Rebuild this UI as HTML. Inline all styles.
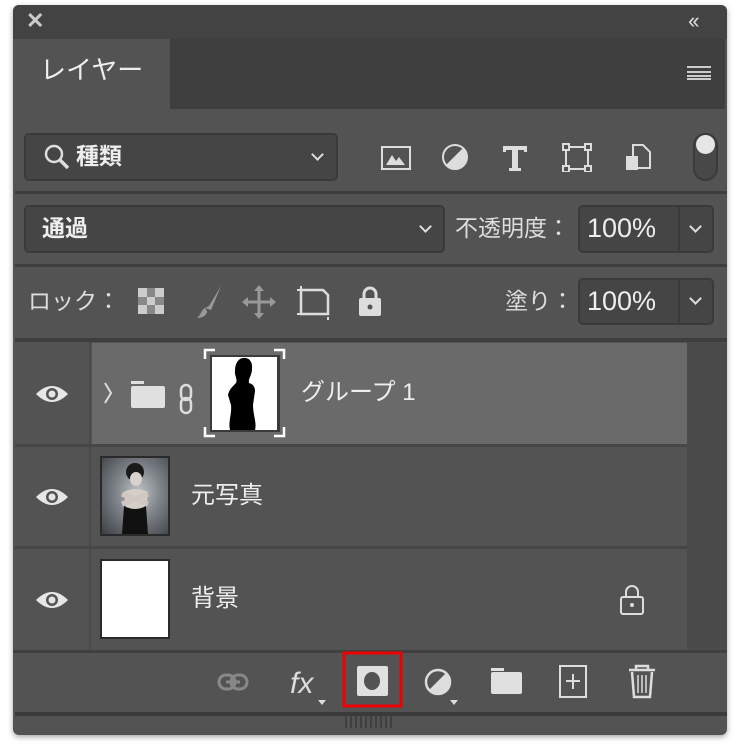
<!DOCTYPE html><html><head><meta charset="utf-8"><style>
*{margin:0;padding:0;box-sizing:border-box}
body{width:740px;height:753px;background:#fff;position:relative;overflow:hidden;font-family:"Liberation Sans","Noto Sans CJK JP",sans-serif;color:#e6e6e6}
.a{position:absolute}
.box{position:absolute;background:#454545;border:2px solid #3a3a3a;border-radius:5px}
.t{position:absolute;font-size:23px;white-space:nowrap;line-height:30px}
.sep{position:absolute;left:15px;width:712px;height:3px;background:#3e3e3e}
.chev{position:absolute;width:9px;height:9px;border-right:2px solid #ddd;border-bottom:2px solid #ddd;transform:rotate(45deg)}
</style></head><body>
<div class="a" style="left:13px;top:5px;width:714px;height:730px;background:#535353;border-radius:6px;box-shadow:0 2px 6px rgba(0,0,0,.35)"></div>
<div class="a" style="left:13px;top:5px;width:714px;height:34px;background:#434343;border-radius:6px 6px 0 0"></div>
<div class="t" style="left:26px;top:6px;font-size:22px;font-weight:bold;color:#ccc">✕</div>
<div class="t" style="left:688px;top:6px;font-size:22px;color:#ddd;letter-spacing:-3px">‹‹</div>
<div class="a" style="left:15px;top:39px;width:710px;height:70px;background:#3f3f3f"></div>
<div class="a" style="left:15px;top:39px;width:155px;height:70px;background:#535353"></div>
<div class="t" style="left:40px;top:55px;font-size:26px;color:#eee">レイヤー</div>
<div class="a" style="left:687px;top:66px;width:24px;height:14px;border-top:2px solid #ccc;border-bottom:2px solid #ccc"></div>
<div class="a" style="left:687px;top:71px;width:24px;height:2px;background:#ccc"></div>
<div class="a" style="left:687px;top:75px;width:24px;height:2px;background:#ccc"></div>

<div class="box" style="left:24px;top:133px;width:314px;height:48px"></div>
<svg class="a" style="left:43px;top:143px" width="28" height="28"><circle cx="11" cy="11" r="8" fill="none" stroke="#ddd" stroke-width="2.5"/><path d="M17 17l8 8" stroke="#ddd" stroke-width="3.5"/></svg>
<div class="t" style="left:76px;top:141px;color:#eee;font-weight:bold">種類</div>
<div class="chev" style="left:313px;top:150px"></div>
<svg class="a" style="left:380px;top:142px" width="290" height="30">
<rect x="2" y="5" width="28" height="22" fill="none" stroke="#ddd" stroke-width="2"/><path d="M6 23l6-10 4 6 3-4 6 8z" fill="#ddd"/>
<circle cx="75" cy="15" r="12" fill="none" stroke="#ddd" stroke-width="2"/><path d="M83 6A12 12 0 0 1 75 27 12 12 0 0 1 66 23z" fill="#ddd"/>
<path d="M123 4h24v6h-3v-2h-6v18h3v3h-12v-3h3v-18h-6v2h-3z" fill="#ddd"/>
<rect x="186" y="5" width="22" height="22" fill="none" stroke="#ddd" stroke-width="2"/><g fill="#535353" stroke="#ddd" stroke-width="2"><rect x="183" y="2" width="6" height="6"/><rect x="205" y="2" width="6" height="6"/><rect x="183" y="24" width="6" height="6"/><rect x="205" y="24" width="6" height="6"/></g>
<path d="M253 3h10l7 7v16h-17z" fill="none" stroke="#ddd" stroke-width="2"/><rect x="246" y="14" width="12" height="14" fill="#ddd"/>
</svg>
<div class="a" style="left:693px;top:133px;width:25px;height:48px;border:2px solid #3a3a3a;border-radius:13px;background:#484848"></div>
<div class="a" style="left:696px;top:135px;width:19px;height:19px;border-radius:50%;background:#e6e6e6"></div>
<div class="sep" style="top:191px"></div>

<div class="box" style="left:24px;top:205px;width:421px;height:48px"></div>
<div class="t" style="left:42px;top:213px;font-weight:bold;color:#eee">通過</div>
<div class="chev" style="left:421px;top:222px"></div>
<div class="t" style="left:455px;top:213px;color:#ddd">不透明度：</div>
<div class="box" style="left:578px;top:205px;width:136px;height:48px"></div>
<div class="a" style="left:678px;top:207px;width:2px;height:44px;background:#3a3a3a"></div>
<div class="t" style="left:587px;top:213px;font-size:27px;color:#eee">100%</div>
<div class="chev" style="left:691px;top:222px"></div>
<div class="sep" style="top:264px"></div>

<div class="t" style="left:28px;top:286px;color:#ddd">ロック：</div>
<svg class="a" style="left:135px;top:284px" width="260" height="36">
<rect x="3" y="4" width="26" height="26" fill="#888"/><g fill="#ccc"><rect x="3" y="4" width="9" height="9"/><rect x="20" y="4" width="9" height="9"/><rect x="12" y="13" width="8" height="8"/><rect x="3" y="21" width="9" height="9"/><rect x="20" y="21" width="9" height="9"/></g>
<path d="M86 2l-12 20-4 2 6 2z" fill="#999"/><path d="M70 24c-4 2-4 7-8 10 6 0 10-3 10-7z" fill="#999"/>
<path d="M124 3v30M109 18h30" stroke="#999" stroke-width="3"/><path d="M124 1l-5 6h10zM124 35l-5-6h10zM107 18l6-5v10zM141 18l-6-5v10z" fill="#999"/>
<path d="M166 6h22l5 5v19h-27z" fill="none" stroke="#ddd" stroke-width="2.5"/><path d="M162 6h4M162 30h4M193 33v3M166 2v4" stroke="#ddd" stroke-width="2"/>
<rect x="224" y="14" width="22" height="18" rx="2" fill="#ddd"/><path d="M229 15v-5a6 6 0 0 1 12 0v5" fill="none" stroke="#ddd" stroke-width="3"/><circle cx="235" cy="23" r="2.5" fill="#535353"/>
</svg>
<div class="t" style="left:505px;top:286px;color:#ddd">塗り：</div>
<div class="box" style="left:578px;top:278px;width:136px;height:47px"></div>
<div class="a" style="left:678px;top:280px;width:2px;height:43px;background:#3a3a3a"></div>
<div class="t" style="left:587px;top:286px;font-size:27px;color:#eee">100%</div>
<div class="chev" style="left:691px;top:294px"></div>
<div class="sep" style="top:338px;height:4px"></div>

<div class="a" style="left:15px;top:342px;width:672px;height:310px;background:#535353"></div>
<div class="a" style="left:89px;top:342px;width:2px;height:310px;background:#4a4a4a"></div>
<div class="a" style="left:687px;top:342px;width:40px;height:310px;background:#4b4b4b"></div>
<div class="a" style="left:92px;top:343px;width:595px;height:101px;background:#6a6a6a"></div>
<div class="a" style="left:15px;top:444px;width:672px;height:3px;background:#464646"></div>
<div class="a" style="left:15px;top:546px;width:672px;height:3px;background:#464646"></div>
<div class="a" style="left:13px;top:650px;width:714px;height:3px;background:#404040"></div>

<svg class="a" style="left:34px;top:382px" width="40" height="240"><g fill="#e6e6e6"><path d="M2 12Q18-4 34 12Q18 28 2 12z"/><path d="M2 115Q18 99 34 115Q18 131 2 115z"/><path d="M2 218Q18 202 34 218Q18 234 2 218z"/></g><g fill="#535353"><circle cx="18" cy="12" r="6"/><circle cx="18" cy="115" r="6"/><circle cx="18" cy="218" r="6"/></g><g fill="#e6e6e6"><circle cx="18" cy="12" r="3.5"/><circle cx="18" cy="115" r="3.5"/><circle cx="18" cy="218" r="3.5"/></g></svg>

<svg class="a" style="left:100px;top:345px" width="200" height="100">
<path d="M5 38l6 10-6 10" fill="none" stroke="#ddd" stroke-width="2"/>
<rect x="31" y="41" width="34" height="22" rx="2" fill="#e0e0e0"/><rect x="31" y="36" width="13" height="3" fill="#e0e0e0"/>
<rect x="81" y="40" width="10" height="15" rx="5" fill="none" stroke="#ddd" stroke-width="2.5"/><rect x="81" y="53" width="10" height="15" rx="5" fill="none" stroke="#ddd" stroke-width="2.5"/>
<path d="M105 14V5h10M174 5h10v9M105 82v9h10M174 91h10v-9" fill="none" stroke="#fff" stroke-width="2.5"/>
<rect x="110" y="10" width="70" height="77" fill="#3a3a3a"/><rect x="112" y="12" width="65" height="73" fill="#fff"/>
<path d="M140 14c6-3 13 0 12 10 0 6-4 10-3 14 4 1 6 4 6 8l-2 14c0 10 4 18 2 25h-25c-2-8 2-16 1-25l-3-10c1-5 4-8 8-12 2-4-2-8-1-12 0-6 2-10 5-12z" fill="#000"/>
</svg>
<div class="t" style="left:301px;top:378px;font-size:24px;color:#eee">グループ 1</div>

<div class="a" style="left:100px;top:456px;width:70px;height:80px;background:#2a2a2a"></div>
<div class="a" style="left:102px;top:458px;width:66px;height:76px;background:radial-gradient(ellipse at 55% 45%,#bfc3c6 0%,#7d8288 45%,#3b3f44 100%)"></div>
<svg class="a" style="left:102px;top:458px" width="66" height="76"><ellipse cx="33" cy="14" rx="9" ry="9" fill="#1a1a1a"/><ellipse cx="34" cy="21" rx="6" ry="7" fill="#d8d2cc"/><path d="M22 34q11-6 24 0l-2 16q-10 4-20 0z" fill="#d6cfc8"/><path d="M22 48q11 6 22 0l2 28h-26z" fill="#111"/><path d="M20 36l26 10M46 36l-26 10" stroke="#cfc7c0" stroke-width="5"/></svg>
<div class="t" style="left:191px;top:481px;font-size:24px;color:#eee">元写真</div>

<div class="a" style="left:100px;top:559px;width:70px;height:80px;background:#2a2a2a"></div>
<div class="a" style="left:102px;top:561px;width:66px;height:76px;background:#fff"></div>
<div class="t" style="left:191px;top:584px;font-size:24px;color:#eee">背景</div>
<svg class="a" style="left:618px;top:584px" width="28" height="32"><path d="M8 13V8a6 6 0 0 1 12 0v5" fill="none" stroke="#ddd" stroke-width="2"/><rect x="3" y="13" width="22" height="17" rx="2" fill="none" stroke="#ddd" stroke-width="2"/><circle cx="14" cy="21" r="2" fill="#ddd"/></svg>

<svg class="a" style="left:210px;top:650px" width="460" height="62">
<g fill="none" stroke="#888" stroke-width="3"><rect x="9" y="25" width="16" height="14" rx="7"/><rect x="21" y="25" width="16" height="14" rx="7"/></g><path d="M16 32h14" stroke="#888" stroke-width="3"/>
<text x="80" y="43" font-family="Liberation Sans,sans-serif" font-style="italic" font-size="30" fill="#ddd">fx</text><path d="M108 50h8l-4 5z" fill="#ddd"/>
<rect x="134" y="3" width="57" height="53" fill="none" stroke="#e00" stroke-width="3"/>
<rect x="147" y="16" width="31" height="30" rx="2" fill="#e0e0e0"/><ellipse cx="162" cy="31" rx="8" ry="9" fill="#535353"/>
<circle cx="228" cy="32" r="12" fill="none" stroke="#ddd" stroke-width="2.5"/><path d="M236 23A12 12 0 0 1 228 44 12 12 0 0 1 219 40z" fill="#ddd"/><path d="M240 50h8l-4 5z" fill="#ddd"/>
<rect x="281" y="22" width="31" height="22" rx="2" fill="#e0e0e0"/><rect x="281" y="18" width="13" height="3" fill="#e0e0e0"/>
<rect x="350" y="16" width="26" height="31" fill="none" stroke="#ddd" stroke-width="2"/><path d="M363 24v15M356 31h14" stroke="#ddd" stroke-width="2"/>
<path d="M419 20h26M426 20v-4h12v4" fill="none" stroke="#ddd" stroke-width="2.5"/><path d="M422 22l2 25h16l2-25" fill="none" stroke="#ddd" stroke-width="2.5"/><path d="M428 25v18M432 25v18M436 25v18" stroke="#ddd" stroke-width="1.5"/>
</svg>
<div class="a" style="left:15px;top:712px;width:712px;height:4px;background:#3a3a3a"></div>
<div class="a" style="left:345px;top:716px;width:48px;height:12px;background:repeating-linear-gradient(90deg,#3f3f3f 0 2px,transparent 2px 5px)"></div>
</body></html>
